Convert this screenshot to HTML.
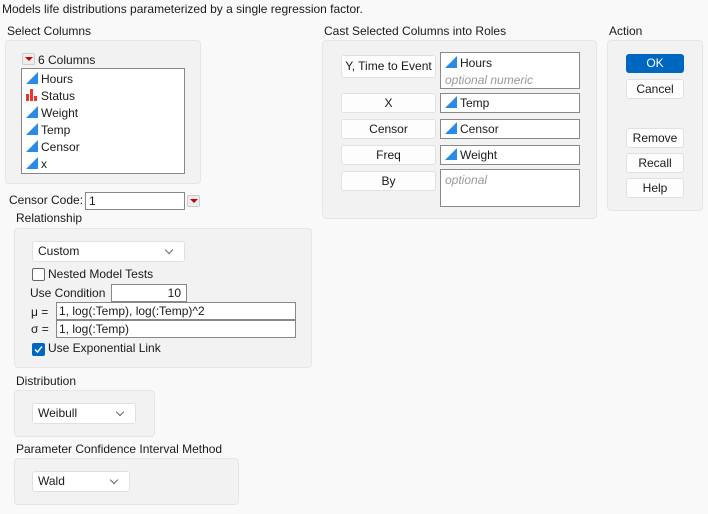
<!DOCTYPE html>
<html><head><meta charset="utf-8"><style>
*{box-sizing:border-box;margin:0;padding:0}
body{width:708px;height:514px;background:#f9f9f9;font-family:"Liberation Sans",sans-serif;font-size:12px;color:#1a1a1a;position:relative;overflow:hidden}
.a{position:absolute;white-space:nowrap}
.p{position:absolute;background:#f2f2f2;border:1px solid #e6e6e6;border-radius:4px}
.box{position:absolute;background:#fff;border:1px solid #888}
.btn{position:absolute;background:#fdfdfd;border:1px solid #e0e0e0;border-radius:3px;text-align:center;line-height:18px}
.cb{position:absolute;background:#fff;border:1px solid #e0e0e0;border-radius:3px;padding-left:5px;line-height:19px}
.cb:after{content:"";position:absolute;right:12px;top:5px;width:5px;height:5px;border-right:1px solid #666;border-bottom:1px solid #666;transform:rotate(45deg)}
.tri{display:inline-block;width:0;height:0;border-left:12px solid transparent;border-bottom:12px solid #2b8ae6;vertical-align:-1px;margin-right:3px}
.it{position:absolute;left:4px}
.ph{color:#999;font-style:italic}
.rd{position:absolute;width:13px;height:12px;background:#eee;border:1px solid #ccc;border-radius:2px}
.rd:after{content:"";position:absolute;left:2px;top:3px;border-left:4px solid transparent;border-right:4px solid transparent;border-top:4px solid #c00}
</style></head><body>
<div class="a" style="left:2px;top:2px">Models life distributions parameterized by a single regression factor.</div>
<div class="a" style="left:7px;top:24px">Select Columns</div>
<div class="p" style="left:5px;top:40px;width:196px;height:144px"></div>
<div class="rd" style="left:22px;top:53px"></div>
<div class="a" style="left:38px;top:53px">6 Columns</div>
<div class="box" style="left:21px;top:68px;width:164px;height:106px">
<div class="it" style="top:3px"><span class="tri"></span>Hours</div>
<div class="it" style="top:20px"><svg width="12" height="12" style="vertical-align:-1px;margin-right:3px"><rect x="0" y="5" width="3" height="7" fill="#e33"/><rect x="4" y="0" width="3" height="12" fill="#e33"/><rect x="8" y="7" width="3" height="5" fill="#e33"/></svg>Status</div>
<div class="it" style="top:37px"><span class="tri"></span>Weight</div>
<div class="it" style="top:54px"><span class="tri"></span>Temp</div>
<div class="it" style="top:71px"><span class="tri"></span>Censor</div>
<div class="it" style="top:88px"><span class="tri"></span>x</div>
</div>
<div class="a" style="left:9px;top:193px">Censor Code:</div>
<div class="box" style="left:85px;top:192px;width:100px;height:18px;padding-left:3px;line-height:16px">1</div>
<div class="rd" style="left:187px;top:195px"></div>
<div class="a" style="left:16px;top:211px">Relationship</div>
<div class="p" style="left:14px;top:228px;width:298px;height:140px"></div>
<div class="cb" style="left:32px;top:241px;width:153px;height:21px">Custom</div>
<div class="a" style="left:32px;top:268px;width:13px;height:13px;border:1px solid #666;border-radius:2px;background:#fff"></div>
<div class="a" style="left:48px;top:267px">Nested Model Tests</div>
<div class="a" style="left:30px;top:286px">Use Condition</div>
<div class="box" style="left:111px;top:284px;width:76px;height:18px;text-align:right;padding-right:5px;line-height:16px">10</div>
<div class="a" style="left:31px;top:305px">μ =</div>
<div class="box" style="left:56px;top:302px;width:240px;height:18px;padding-left:2px;line-height:16px">1, log(:Temp), log(:Temp)^2</div>
<div class="a" style="left:31px;top:322px">σ =</div>
<div class="box" style="left:56px;top:320px;width:240px;height:18px;padding-left:2px;line-height:16px">1, log(:Temp)</div>
<div class="a" style="left:32px;top:343px;width:13px;height:13px;background:#0067c0;border-radius:2px"><svg width="13" height="13" style="position:absolute;left:0;top:0"><path d="M3 6.5 L5.5 9 L10 3.5" stroke="#fff" stroke-width="1.5" fill="none"/></svg></div>
<div class="a" style="left:48px;top:341px">Use Exponential Link</div>
<div class="a" style="left:16px;top:374px">Distribution</div>
<div class="p" style="left:14px;top:390px;width:141px;height:47px"></div>
<div class="cb" style="left:32px;top:403px;width:104px;height:21px">Weibull</div>
<div class="a" style="left:16px;top:442px">Parameter Confidence Interval Method</div>
<div class="p" style="left:14px;top:458px;width:225px;height:47px"></div>
<div class="cb" style="left:32px;top:471px;width:98px;height:21px">Wald</div>

<div class="a" style="left:324px;top:24px">Cast Selected Columns into Roles</div>
<div class="p" style="left:322px;top:40px;width:275px;height:179px"></div>
<div class="btn" style="left:341px;top:55px;width:95px;height:23px;line-height:21px">Y, Time to Event</div>
<div class="btn" style="left:341px;top:93px;width:95px;height:20px">X</div>
<div class="btn" style="left:341px;top:119px;width:95px;height:20px">Censor</div>
<div class="btn" style="left:341px;top:145px;width:95px;height:20px">Freq</div>
<div class="btn" style="left:341px;top:171px;width:95px;height:20px">By</div>
<div class="box" style="left:440px;top:52px;width:140px;height:37px"><div class="it" style="top:3px"><span class="tri"></span>Hours</div><div class="it ph" style="top:20px">optional numeric</div></div>
<div class="box" style="left:440px;top:93px;width:140px;height:20px"><div class="it" style="top:2px"><span class="tri"></span>Temp</div></div>
<div class="box" style="left:440px;top:119px;width:140px;height:20px"><div class="it" style="top:2px"><span class="tri"></span>Censor</div></div>
<div class="box" style="left:440px;top:145px;width:140px;height:20px"><div class="it" style="top:2px"><span class="tri"></span>Weight</div></div>
<div class="box" style="left:440px;top:169px;width:140px;height:38px"><div class="it ph" style="top:3px">optional</div></div>

<div class="a" style="left:609px;top:24px">Action</div>
<div class="p" style="left:607px;top:40px;width:96px;height:171px"></div>
<div class="btn" style="left:626px;top:54px;width:58px;height:19px;background:#0067c0;border-color:#0067c0;color:#fff;line-height:17px">OK</div>
<div class="btn" style="left:626px;top:79px;width:58px;height:20px">Cancel</div>
<div class="btn" style="left:626px;top:128px;width:58px;height:20px">Remove</div>
<div class="btn" style="left:626px;top:153px;width:58px;height:20px">Recall</div>
<div class="btn" style="left:626px;top:178px;width:58px;height:20px">Help</div>
</body></html>
